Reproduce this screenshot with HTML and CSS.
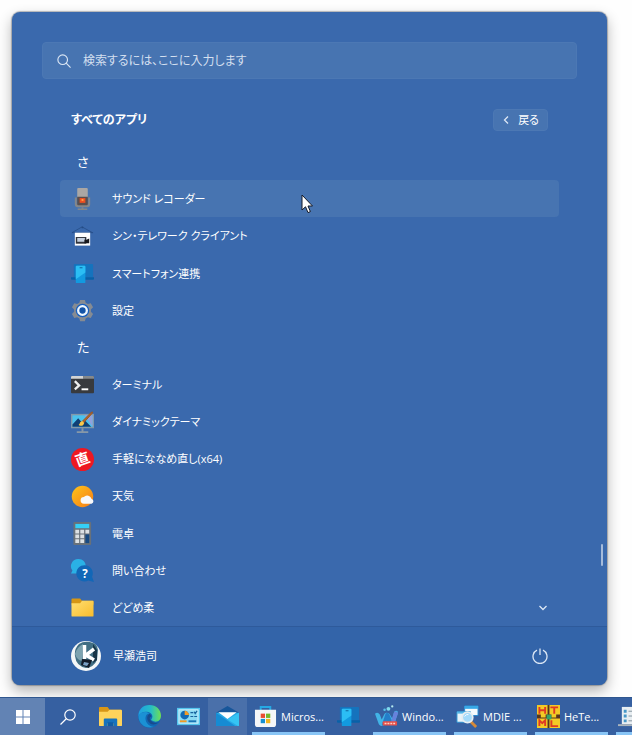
FILE: index.html
```html
<!DOCTYPE html>
<html lang="ja">
<head>
<meta charset="utf-8">
<meta name="viewport" content="width=device-width, initial-scale=1">
<title>スタート</title>
<link rel="stylesheet" href="styles.css">
</head>
<body>
<main class="start">
  <div class="start-body">
    <label class="search">
      <svg class="search-icon" viewBox="0 0 16 16" aria-hidden="true"><circle cx="6.500" cy="6.500" r="5.500"/><path d="M10.500 10.500L15.500 15.500"/></svg>
      <input class="search-input" type="text" placeholder="検索するには、ここに入力します" aria-label="検索">
    </label>
    <div class="heading-row">
      <h1 class="heading">すべてのアプリ</h1>
      <button class="back" type="button">
        <svg class="back-icon" viewBox="0 0 8 10" aria-hidden="true"><path d="M6 1.500L2.500 5L6 8.500"/></svg>
        <span>戻る</span>
      </button>
    </div>
    <div class="apps">
      <h2 class="letter">さ</h2>
      <button class="app app-hover" type="button">
        <svg class="icon" viewBox="0 0 24 24" aria-hidden="true"><path d="M4 10v7q0 3 3 3h10q3 0 3-3v-7h-2v7H6v-7z" fill="#858789"/><path d="M7.500 0h9q1 0 1 1v9h-11V1q0-1 1-1z" fill="#aaa7a4"/><path d="M6.500 9h11v8q0 1-1 1h-9q-1 0-1-1z" fill="#594f4e"/><path d="M9 10.500h6v5H9z" fill="#ed5022"/><path d="M11 11.500h2v2h-2z" fill="#ff9f42"/><path d="M11 20h2v1.500h4V23H7v-1.500h4z" fill="#858789"/></svg>
        <span>サウンド レコーダー</span>
        <svg class="cursor" viewBox="0 0 12 20" aria-hidden="true"><path d="M1 1v15l3.500-3.200L7 18.600l2.400-1L7 12h4.500z" fill="#fff" stroke="#151b28"/></svg>
      </button>
      <button class="app" type="button">
        <svg class="icon" viewBox="0 0 24 24" aria-hidden="true"><path d="M1 8l10.500-6L22.500 8M1 8h22" fill="none" stroke="#244c86" stroke-width=".8"/><circle cx="12" cy="2.500" r="1" fill="#244c86"/><path d="M4 8h16v13.500H4z" fill="#fff"/><path d="M5 12.500h11v7H5z" fill="#30343c"/><path d="M6.500 13.500h8v4h-8z" fill="#c5d0df"/><path d="M14 15.500h2l3-1.500v5h-5z" fill="#17191f"/></svg>
        <span>シン・テレワーク クライアント</span>
      </button>
      <button class="app" type="button">
        <svg class="icon" viewBox="0 0 24 24" aria-hidden="true"><use href="#phone-link"/></svg>
        <span>スマートフォン連携</span>
      </button>
      <button class="app" type="button">
        <svg class="icon" viewBox="0 0 24 24" aria-hidden="true"><path d="M9.500 1h5l.8 3 2.300 1.300 3-.9 2.400 4.300-2.200 2.200v2.500l2.200 2.200-2.400 4.300-3-.9-2.300 1.300-.8 3h-5l-.8-3L6.400 19l-3 .9L1 15.600l2.200-2.200v-2.500L1 8.700l2.400-4.300 3 .9L8.700 4z" fill="#858b93"/><circle cx="12" cy="12" r="7" fill="#175fc0"/><circle cx="12" cy="12" r="4.500" fill="#1554a7" stroke="#eef7ff" stroke-width="2.400"/></svg>
        <span>設定</span>
      </button>
      <h2 class="letter">た</h2>
      <button class="app" type="button">
        <svg class="icon" viewBox="0 0 24 24" aria-hidden="true"><path d="M0 4q0-1 1-1h22q1 0 1 1v16q0 1-1 1H1q-1 0-1-1z" fill="#383a3e"/><path d="M0 6V4q0-1 1-1h12v3z" fill="#d2d4d5"/><path d="M13 3h10q1 0 1 1v2H13z" fill="#85898c"/><path d="M4 8.500L8.500 13 4 17" fill="none" stroke="#eee" stroke-width="2.400"/><path d="M11 17h7" stroke="#fff" stroke-width="2"/></svg>
        <span>ターミナル</span>
      </button>
      <button class="app" type="button">
        <svg class="icon" viewBox="0 0 24 24" aria-hidden="true"><path d="M11 18h2v3h5v2H6v-2h5z" fill="#8798a8"/><path d="M0 3h24v15H0z" fill="#8298aa"/><path d="M1.500 4.500h21v12h-21z" fill="#4ac2ee"/><path d="M14 4.500h8.500v12z" fill="#91a1dc"/><path d="M1.500 14l6-6.500 3.500 4 3-2 7 7h-19.500z" fill="#103f74"/><path d="M11.500 11L21 1.500l1.500-.5-.5 1.500-9 10z" fill="#b0672a" stroke="#9b5723"/><path d="M8 14.500q1-.8 1.800-3l2-1 2 2-1 2q-2.300 2-4.800 0z" fill="#f9c84a"/></svg>
        <span>ダイナミックテーマ</span>
      </button>
      <button class="app" type="button">
        <svg class="icon" viewBox="0 0 24 24" aria-hidden="true"><circle cx="12" cy="12" r="12" fill="#ee1822"/><text class="icon-kanji" x="12" y="17" transform="rotate(-20 12 12)">直</text></svg>
        <span>手軽にななめ直し(x64)</span>
      </button>
      <button class="app" type="button">
        <svg class="icon" viewBox="0 0 24 24" aria-hidden="true"><defs><linearGradient id="sun" x2="1" y2="1"><stop stop-color="#ffc51b"/><stop offset="1" stop-color="#f57b16"/></linearGradient></defs><circle cx="12" cy="12" r="11.200" fill="url(#sun)"/><path d="M13.500 19.500a3.500 3.500 0 0 1 0-7 4.800 4.800 0 0 1 8 2 2.600 2.600 0 0 1 0 5z" fill="#f7f8fa"/></svg>
        <span>天気</span>
      </button>
      <button class="app" type="button">
        <svg class="icon" viewBox="0 0 24 24" aria-hidden="true"><rect x="2.500" y="0" width="18.500" height="24" rx="1" fill="#68717a"/><path d="M4.500 2h14.500v4.500H4.500z" fill="#35cff6"/><path d="M4.500 8h4v4h-4zm5.200 0h4v4h-4zm5.300 0h4v4h-4zM4.500 13h4v4h-4zm5.200 0h4v4h-4zM4.500 18h4v4h-4zm5.200 0h4v4h-4z" fill="#dce1e4"/><path d="M15 13h4v9h-4z" fill="#174a83"/></svg>
        <span>電卓</span>
      </button>
      <button class="app" type="button">
        <svg class="icon" viewBox="0 0 24 24" aria-hidden="true"><path d="M8 0a7.500 7.500 0 0 1 7.500 7.500V15H0l1.500-3A7.500 7.500 0 0 1 8 0z" fill="#2ab1e6"/><path d="M14.500 6.500a8.500 8.500 0 0 1 7.500 12L24 24l-6-1.500a8.500 8.500 0 1 1-3.500-16z" fill="#1267b7"/><text class="icon-question" x="14.500" y="19.500">?</text></svg>
        <span>問い合わせ</span>
      </button>
      <button class="app" type="button">
        <svg class="icon" viewBox="0 0 24 24" aria-hidden="true"><defs><linearGradient id="folder" x2="1" y2="1"><stop stop-color="#ffdf73"/><stop offset="1" stop-color="#f8bc2c"/></linearGradient></defs><path d="M.500 3.500q0-1 1-1h8l2 2.500h12v4H.500z" fill="#d69615"/><path d="M.500 7.500h9l2-2.500h11q1 0 1 1v14.500q0 1-1 1h-21q-1 0-1-1z" fill="url(#folder)"/></svg>
        <span>どどめ柔</span>
        <svg class="chevron" viewBox="0 0 10 8" aria-hidden="true"><path d="M1.500 2L5 5.500L8.500 2"/></svg>
      </button>
    </div>
    <div class="scroll-thumb"></div>
  </div>
  <footer class="user-bar">
    <button class="user" type="button">
      <svg class="avatar" viewBox="0 0 30 30" aria-hidden="true"><circle cx="15" cy="15" r="15" fill="#f4f7f8"/><path d="M8 3q-5 5-4 12 1 10 11 12 8-1 11-8l1-10q-1-6-5-7Q14-1 8 3z" fill="#416e83"/><path d="M4 13q2-7 8-10l-1 17q-5-1-7-7z" fill="#7da3b0"/><path d="M22 3l4 6v10l-4 3z" fill="#173447"/><path d="M13.500 4v14M23 8l-8 6 8 5" fill="none" stroke="#fff" stroke-width="3.500"/><path d="M11 18l10 1-3 8-8-3z" fill="#141c28"/><path d="M13 21l5 1-2 3-4-1z" fill="#7ca1c4"/></svg>
      <span>早瀬浩司</span>
    </button>
    <button class="power" type="button" aria-label="電源">
      <svg class="power-icon" viewBox="0 0 16 16" aria-hidden="true"><path d="M5 2.200a7 7 0 1 0 6 0M8 .5v6.500"/></svg>
    </button>
  </footer>
</main>
<nav class="taskbar">
  <button class="task task-start" type="button" aria-label="スタート"><svg class="icon-small" viewBox="0 0 16 16" aria-hidden="true"><path d="M1 1h6.500v6.500H1zm7.500 0H15v6.500H8.500zM1 8.500h6.500V15H1zm7.500 0H15V15H8.500z" fill="#fff"/></svg></button>
  <button class="task task-search" type="button" aria-label="検索"><svg class="icon-small" viewBox="0 0 16 16" aria-hidden="true"><g fill="none" stroke="#fff" stroke-width="1.200"><circle cx="10" cy="6" r="5.200"/><path d="M6.500 9.500L.5 15.500"/></g></svg></button>
  <button class="task" type="button" aria-label="エクスプローラー"><svg class="icon" viewBox="0 0 24 24" aria-hidden="true"><path d="M0 3q0-1 1-1h8l2 3h12v5H0z" fill="#d99616"/><path d="M0 7h9l2-2h12q1 0 1 1v15q0 1-1 1H1q-1 0-1-1z" fill="#ffd35b"/><path d="M5 22v-7q0-1 1-1h12q1 0 1 1v7h-4v-3H9v3z" fill="#1772bd"/><path d="M9 18h6v4H9z" fill="#115ca4"/></svg></button>
  <button class="task" type="button" aria-label="Edge"><svg class="icon" viewBox="0 0 24 24" aria-hidden="true"><defs><linearGradient id="edge-top"><stop stop-color="#209ee1"/><stop offset=".55" stop-color="#25bdc7"/><stop offset="1" stop-color="#70df52"/></linearGradient></defs><circle cx="12" cy="12" r="11.800" fill="#1267b4"/><path d="M.5 12C0 5 5 0 12 0s12 5 12 11-5 8-10 5c-1-.8 1-1.500 1-4 0-3-3-5-7-5-3.500 0-6 2-7.500 5z" fill="url(#edge-top)"/><path d="M.5 12c2-5 8-6 12-3-5-.5-6 6-3 10 2 2.700 5 4 8 3.500C9 26 .5 20 .5 12z" fill="#1b91d4"/><path d="M12 9q-4 3-1.500 8 4 6 11.500 1-6 2-9-2-2-3 1-4 0-2-2-3z" fill="#174c8e"/></svg></button>
  <button class="task" type="button" aria-label="コントロール パネル"><svg class="icon" viewBox="0 0 24 24" aria-hidden="true"><path d="M0 3h24v18H0z" fill="#54c5ee"/><path d="M1.500 4.500h21v15h-21z" fill="#d9f3fc"/><path d="M2.500 5.500h19v13h-19z" fill="#8adaf3"/><circle cx="8" cy="10.500" r="4.500" fill="#126ab5"/><path d="M8 6a4.500 4.500 0 0 1 4.500 4.500H8z" fill="#f39b24"/><path d="M14 8h3m1-1l1 2 2-3M14 12h3m1 0h3" stroke="#17619c" stroke-width="1.300" fill="none"/><path d="M3 17h7" stroke="#f19a22" stroke-width="2"/><path d="M12 17h8" stroke="#1974b5" stroke-width="2"/></svg></button>
  <button class="task task-active" type="button" aria-label="メール"><svg class="icon" viewBox="0 0 24 24" aria-hidden="true"><path d="M0 8L12 1l12 7v5H0z" fill="#17569a"/><path d="M0 8h24v13q0 1-1 1H1q-1 0-1-1z" fill="#28a9e5"/><path d="M12 15l12-7v13q0 1-1 1z" fill="#35c4f3"/><path d="M0 8l20 14H1q-1 0-1-1z" fill="#168bd3"/><path d="M2.500 7.500h19L12 14.500z" fill="#fff"/></svg></button>
  <button class="task task-open task-store" type="button"><svg class="icon" viewBox="0 0 24 24" aria-hidden="true"><path d="M7 6V2h10v4" fill="none" stroke="#25a9e4" stroke-width="2"/><path d="M1 5h22v15q0 3-3 3H4q-3 0-3-3z" fill="#f4f6f8"/><path d="M7 9h4.500v4.500H7z" fill="#e94d32"/><path d="M12.500 9H17v4.500h-4.500z" fill="#76b82a"/><path d="M7 14.500h4.500V19H7z" fill="#168fd1"/><path d="M12.500 14.500H17V19h-4.500z" fill="#f3b51e"/></svg><span>Micros...</span></button>
  <button class="task task-phone" type="button" aria-label="スマートフォン連携"><svg class="icon" viewBox="0 0 24 24" aria-hidden="true"><g id="phone-link"><path d="M3 3q0-1 1-1h18q1 0 1 1v13H3z" fill="#1573bd"/><path d="M0 16h24v1.500q0 1-1 1H1q-1 0-1-1z" fill="#0861a8"/><rect x="5" y="4" width="10" height="18" rx="1" fill="#129ae0"/><path d="M5 5q0-1 1-1h8q1 0 1 1v6L5 18z" fill="#2bbef4"/><path d="M9 6h3" stroke="#0f629c"/></g></svg></button>
  <button class="task task-open" type="button"><svg class="icon" viewBox="0 0 24 24" aria-hidden="true"><path d="M0 9q3-2 5 1l2 5 3-6q2-2 5 0l3 5 2-7q2-2 4 0l-3 11q-2 4-5 3l-4-5-3 5q-3 2-5-1z" fill="#42b4e6"/><path d="M7 21l4-12q2-2 4 1l4 10q-2 3-5 0l-2-4-2 4q-1 2-3 1z" fill="#247ec9"/><path d="M20 7q4-1 4 2l-4 10-4 1z" fill="#6782dc"/><circle cx="14" cy="4" r="2" fill="#80dbec"/><circle cx="10" cy="5" r="1.300" fill="#59c4e9"/><circle cx="18" cy="1.500" r="1.200" fill="#b6ebef"/><rect x="8" y="17" width="15" height="4.500" rx="1" fill="#e64f49"/><path d="M10 19.300h11" stroke="#ffd1c2" stroke-width="1.500" stroke-dasharray="2 1"/></svg><span>Windo...</span></button>
  <button class="task task-open" type="button"><svg class="icon" viewBox="0 0 24 24" aria-hidden="true"><path d="M9 1h14v10H9z" fill="#f5fafd" stroke="#2387d0"/><path d="M9 1h14v3H9z" fill="#38a8e6"/><path d="M1 7h14v11H1z" fill="#e8f4fa" stroke="#2d91cf"/><path d="M1 7h14v2H1z" fill="#55b7e8"/><path d="M15 17l6 6" stroke="#d68a38" stroke-width="3"/><circle cx="12" cy="13" r="5.500" fill="#a3dafa" stroke="#e6edf0" stroke-width="1.800"/><path d="M9 12q2-3 4-2" stroke="#fff" fill="none"/></svg><span>MDIE ...</span></button>
  <button class="task task-open" type="button"><svg class="icon" viewBox="0 0 24 24" aria-hidden="true"><path d="M0 0h24v24H0z" fill="#55351f"/><path d="M0 0h11v10H9v3H4v-3H0zm13 0h11v10h-4v3h-5v-3h-2zM0 14h11v10H0zm13 0h11v10H13z" fill="#f3ca26"/><path d="M2.500 2v7m6-7v7M2 5.500h6M14 2.500h8M18 2v7M2.500 22v-6l3 3 3-3v6M15 16v6h7" stroke="#df3b24" stroke-width="2" fill="none"/><path d="M10 10h5v5h-5z" fill="#35a367"/></svg><span>HeTe...</span></button>
  <button class="task task-open task-last" type="button" aria-label="一覧"><svg class="icon" viewBox="0 0 24 24" aria-hidden="true"><path d="M4 2h19v18H4z" fill="#e8eef2"/><path d="M6 5h3v3H6zm0 5h3v3H6zm0 5h3v3H6z" fill="#4597c8"/><path d="M11 6.500h10M11 11.500h10M11 16.500h10" stroke="#83919c"/><path d="M0 20h24v2H0z" fill="#aab4bc"/></svg></button>
</nav>
</body>
</html>
```

FILE: styles.css
```css
* { box-sizing: border-box; }

body {
  margin: 0;
  min-height: 100vh;
  display: flex;
  flex-direction: column;
  overflow: hidden;
  background: #fefefe;
  color: #fff;
  font: 11px/16px "Open Sans", "Noto Sans CJK JP", sans-serif;
  font-feature-settings: "palt";
}

button {
  margin: 0;
  padding: 0;
  border: 0;
  background: none;
  color: inherit;
  font: inherit;
  font-feature-settings: inherit;
  text-align: left;
}

svg { flex: none; }

.start {
  flex: 1;
  display: flex;
  flex-direction: column;
  margin: 12px 25px 12px 12px;
  border-radius: 8px;
  background: #3a69ad;
  box-shadow: 0 0 1px 1px rgba(60, 65, 75, 0.35), 0 6px 14px rgba(0, 0, 0, 0.3);
}

.start-body {
  position: relative;
  flex: 1;
  display: flex;
  flex-direction: column;
  padding: 30px 30px 0;
}

.search {
  display: flex;
  align-items: center;
  gap: 12px;
  height: 37px;
  padding: 0 14px;
  border: 1px solid #4c78b4;
  border-radius: 4px;
  background: #4774b1;
}

.search-icon { width: 14px; height: 14px; }

.search-icon,
.back-icon,
.chevron,
.power-icon {
  fill: none;
  stroke: #dce7f5;
  stroke-width: 1.3;
}

.search-input {
  flex: 1;
  min-width: 0;
  padding: 0;
  border: 0;
  outline: 0;
  background: none;
  color: inherit;
  font: inherit;
  font-size: 12px;
  font-feature-settings: inherit;
}

.search-input::placeholder { color: #d3dfef; opacity: 1; }

.heading-row {
  display: flex;
  align-items: center;
  justify-content: space-between;
  margin: 30px 29px 12px;
}

.heading {
  margin: 0;
  font-size: 12px;
  font-weight: 700;
}

.back {
  display: flex;
  align-items: center;
  gap: 8px;
  height: 22px;
  padding: 0 8px;
  border: 1px solid #4c78b4;
  border-radius: 4px;
  background: #4774b1;
}

.back-icon { width: 8px; height: 10px; }

.apps {
  flex: 1;
  display: grid;
  grid-auto-rows: 1fr;
  margin: 0 18px;
}

.letter {
  display: flex;
  align-items: center;
  margin: 0;
  padding-left: 17px;
  font-size: 13px;
  font-weight: 400;
}

.app {
  position: relative;
  display: flex;
  align-items: center;
  gap: 18px;
  padding: 1px 11px 0;
  border-radius: 4px;
}

.app-hover { background: #4774b1; }

.icon {
  width: 23px;
  height: 23px;
  overflow: visible;
}

.icon-small { width: 16px; height: 16px; }

.icon-kanji {
  fill: #fff;
  font: 700 15px "Noto Sans CJK JP", sans-serif;
  text-anchor: middle;
}

.icon-question {
  fill: #fff;
  font: 700 12px "Open Sans", sans-serif;
  text-anchor: middle;
}

.chevron {
  width: 10px;
  height: 8px;
  margin-left: auto;
}

.cursor {
  position: absolute;
  left: 241px;
  top: 14px;
  width: 12px;
  height: 20px;
}

.scroll-thumb {
  position: absolute;
  right: 4px;
  bottom: 60px;
  width: 2px;
  height: 22px;
  border-radius: 1px;
  background: #a5bbdb;
}

.user-bar {
  display: flex;
  align-items: center;
  justify-content: space-between;
  height: 59px;
  padding: 0 59px;
  border-top: 1px solid #2e5a9b;
  border-radius: 0 0 8px 8px;
  background: #3364a9;
}

.user {
  display: flex;
  align-items: center;
  gap: 12px;
}

.avatar { width: 30px; height: 30px; }

.power { display: flex; }

.power-icon { width: 16px; height: 16px; }

.taskbar {
  display: flex;
  height: 38px;
  overflow: hidden;
  border-top: 1px solid #30578f;
  background: #3660a1;
}

.task {
  flex: none;
  display: flex;
  align-items: center;
  justify-content: center;
  width: 39px;
}

.task-start { width: 45px; background: #6283b4; }

.task-search,
.task-phone { width: 46px; }

.task-active { background: #4a70aa; }

.task-open {
  justify-content: flex-start;
  gap: 4px;
  width: 73px;
  margin-right: 8px;
  padding: 3px 2px 0;
  border-bottom: 3px solid #88c5f6;
}

.task-store { margin: 0 0 0 5px; }

.task-phone { margin-right: 2px; }
```
